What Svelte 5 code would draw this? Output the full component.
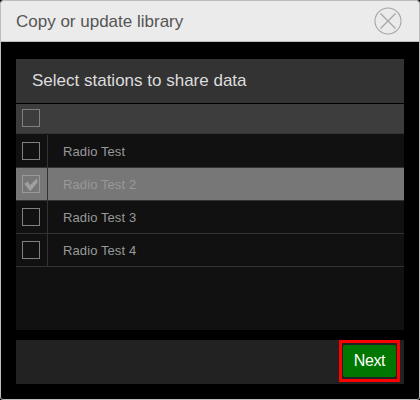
<script lang="ts">
	let stations = $state([
		{ name: 'Radio Test', checked: false },
		{ name: 'Radio Test 2', checked: true },
		{ name: 'Radio Test 3', checked: false },
		{ name: 'Radio Test 4', checked: false }
	]);

	function toggle(i: number) {
		stations[i].checked = !stations[i].checked;
	}
</script>

<div class="dialog" role="dialog" aria-labelledby="title">
	<header>
		<span id="title">Copy or update library</span>
		<button class="close" aria-label="Close">
			<svg width="28" height="28" viewBox="0 0 28 28" fill="none" stroke="#a6a6a6">
				<circle cx="14" cy="14" r="13" stroke-width="1.1" />
				<path d="M6.5 6.5 21.5 21.5M21.5 6.5 6.5 21.5" stroke-width="1.3" />
			</svg>
		</button>
	</header>

	<div class="body">
		<div class="panel">
			<div class="heading">Select stations to share data</div>
			<div class="all"><span class="box"></span></div>
			{#each stations as station, i}
				<button class="row" class:selected={station.checked} onclick={() => toggle(i)}>
					<span class="cell">
						<span class="box">
							{#if station.checked}
								<svg width="16" height="16" viewBox="0 0 16 16">
									<path d="M1.3 7.8 4.7 5.6 7 9.2 13.8 2.4 14.6 6.2 7.2 15.2Z" fill="#a0a0a0" />
								</svg>
							{/if}
						</span>
					</span>
					<span class="name">{station.name}</span>
				</button>
			{/each}
		</div>

		<footer>
			<div class="highlight">
				<button class="next">Next</button>
			</div>
		</footer>
	</div>
</div>

<style>
	:global(body) {
		background: #000;
	}

	.dialog {
		box-sizing: border-box;
		width: 420px;
		height: 400px;
		border: 1px solid #bdbdbd;
		border-radius: 3px;
		background: #000;
		font-family: 'Liberation Sans', Arial, sans-serif;
		overflow: hidden;
	}

	button {
		margin: 0;
		padding: 0;
		border: 0;
		background: none;
		font-family: inherit;
		cursor: pointer;
	}

	header {
		display: flex;
		align-items: center;
		justify-content: space-between;
		height: 40px;
		padding: 0 17px 0 15px;
		border-bottom: 1px solid #bdbdbd;
		background: #ebebeb;
		color: #555;
		font-size: 17px;
	}

	#title {
		padding-top: 2px;
	}

	.close,
	.box svg {
		display: block;
	}

	.close {
		height: 28px;
	}

	.body {
		padding: 17px 15px 0;
	}

	.panel {
		height: 271px;
		background: #111;
	}

	.heading {
		height: 44px;
		padding-left: 16px;
		border-bottom: 1px solid #000;
		background: #333;
		color: #ddd;
		font-size: 17px;
		line-height: 43px;
	}

	.all {
		height: 24px;
		padding: 5px 0 0 6px;
		border-bottom: 1px solid #333;
		background: #3d3d3d;
	}

	.box {
		box-sizing: border-box;
		display: block;
		width: 18px;
		height: 18px;
		border: 1px solid #808080;
	}

	.row {
		display: flex;
		align-items: stretch;
		width: 100%;
		height: 33px;
		border-bottom: 1px solid #333;
		color: #999;
		font-size: 13px;
		letter-spacing: 0.1px;
		text-align: left;
	}

	.all + .row {
		height: 34px;
		padding-top: 1px;
	}

	.selected {
		background: #777;
	}

	.selected .box {
		border-color: #999;
	}

	.cell {
		width: 25px;
		padding: 7px 0 0 6px;
		border-right: 1px solid #333;
	}

	.name {
		padding-left: 15px;
		line-height: 33px;
	}

	footer {
		display: flex;
		justify-content: flex-end;
		height: 44px;
		margin-top: 10px;
		padding-right: 4px;
		background: #222;
	}

	.highlight {
		box-sizing: border-box;
		width: 61px;
		height: 42px;
		padding: 2px 1px;
		border: 3px solid #f00;
	}

	.next {
		display: block;
		width: 53px;
		height: 32px;
		border-radius: 2px;
		background: #070;
		color: #fff;
		font-size: 16px;
		letter-spacing: -0.4px;
		line-height: 32px;
	}
</style>
